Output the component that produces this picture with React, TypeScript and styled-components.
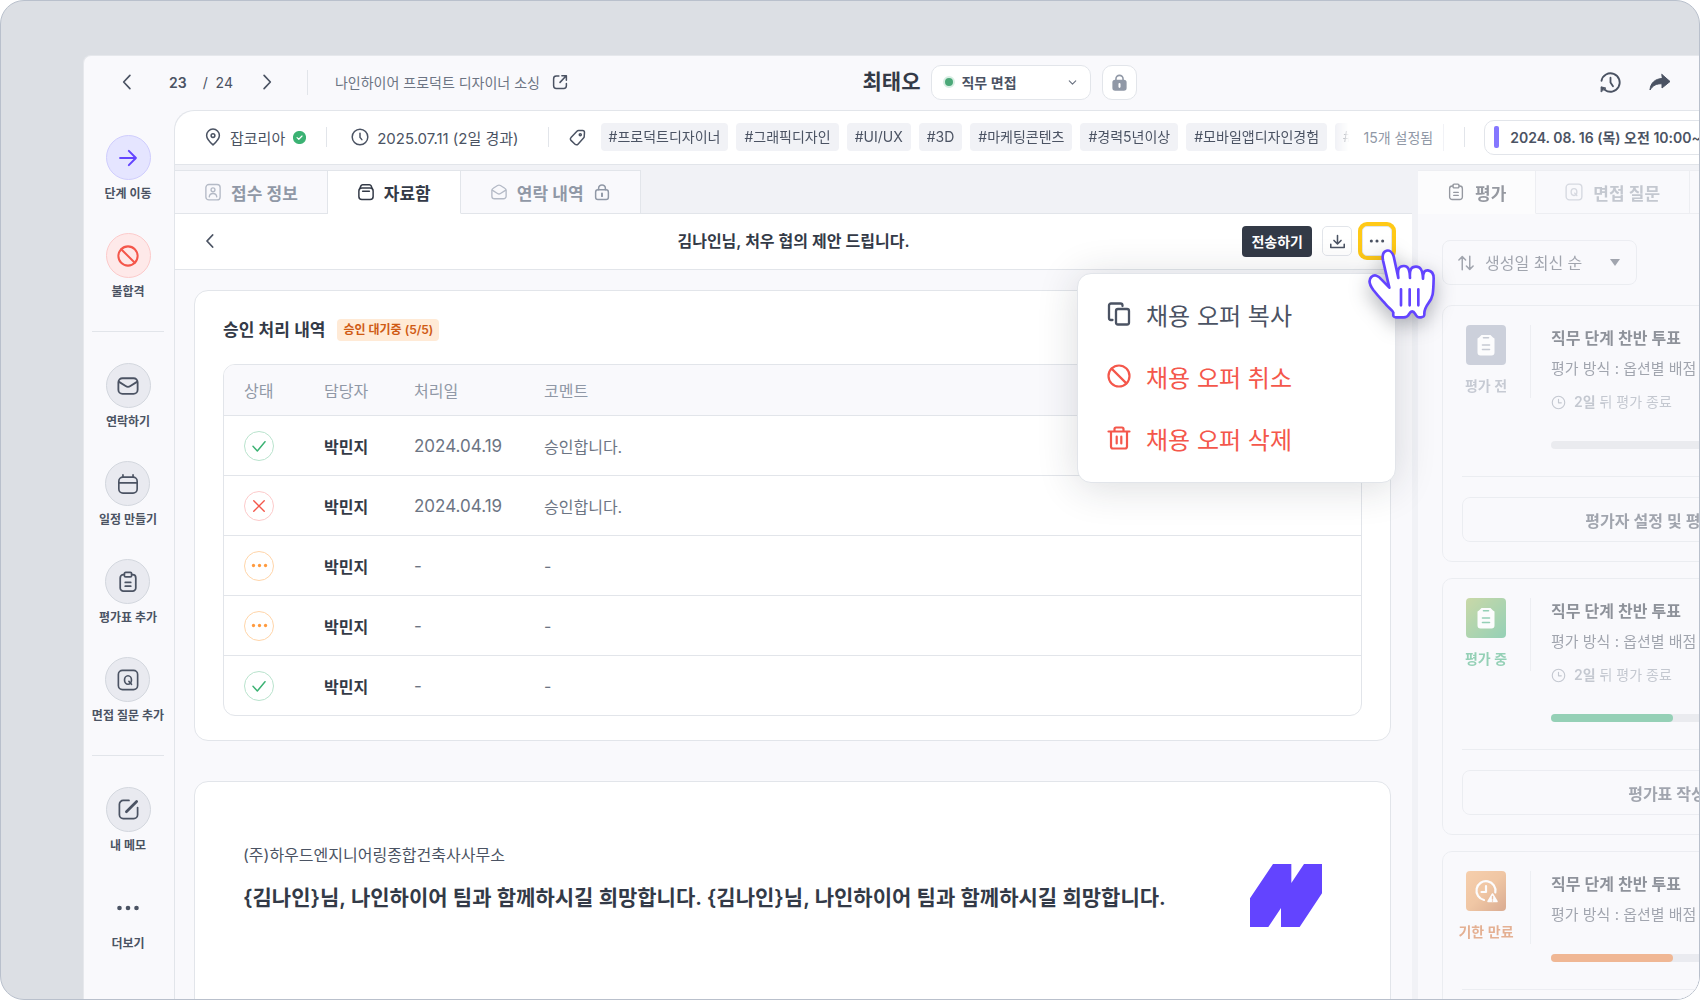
import React from 'react';
import styled, { createGlobalStyle, css } from 'styled-components';

const c = {
  line: '#e2e5ea',
  soft: '#f9f9fc',
  mute: '#f1f2f6',
  ink: '#333a47',
  text: '#4b5363',
  sub: '#6c7483',
  faint: '#9098a6',
  violet: '#6344ff',
  green: '#33a973',
  red: '#f4574b',
  orange: '#ff9a3e',
};

const Global = createGlobalStyle`
  *, *::before, *::after { box-sizing: border-box; }
  body { margin: 0; background: #fff; }
  body, button, select, table {
    font-family: Inter, 'Noto Sans CJK KR', sans-serif;
    color: ${c.text};
  }
  button, select { margin: 0; padding: 0; border: 0; background: none; font-size: inherit; }
  h1, h2, h3, p, ul { margin: 0; padding: 0; }
  ul { list-style: none; }
  a { color: inherit; text-decoration: none; }
  svg { display: block; flex: none; }
`;

/* ---------- icons ---------- */

type IconProps = { size?: number; color?: string; width?: number; children?: React.ReactNode };

const Svg = ({ size = 20, color = 'currentColor', width = 2, children }: IconProps) => (
  <svg
    width={size}
    height={size}
    viewBox="0 0 24 24"
    fill="none"
    stroke={color}
    strokeWidth={width}
    strokeLinecap="round"
    strokeLinejoin="round"
    aria-hidden="true"
  >
    {children}
  </svg>
);

const ChevronLeft = (p: IconProps) => <Svg {...p}><path d="M15.5 4 8 12l7.5 8" /></Svg>;
const ChevronRight = (p: IconProps) => <Svg {...p}><path d="M8.5 4 16 12l-7.5 8" /></Svg>;
const ChevronDown = (p: IconProps) => <Svg {...p}><path d="m5 8.500 7 7 7-7" /></Svg>;
const ExternalIcon = (p: IconProps) => (
  <Svg {...p}><path d="M10.5 4H7a3.500 3.500 0 0 0-3.500 3.500V17A3.500 3.500 0 0 0 7 20.500h10a3.500 3.500 0 0 0 3.500-3.500v-3M14.500 3.500h6v6M20 4l-8 8.500" /></Svg>
);
const HistoryIcon = (p: IconProps) => (
  <Svg {...p}><path d="M2.6 10.200A9.600 9.600 0 1 1 6 19.500" /><path d="M2.200 21.500v-5l4.600 1.200z" fill="currentColor" strokeWidth="1" /><path d="M12 7v5l2.600 4" /></Svg>
);
const ShareIcon = (p: IconProps) => (
  <Svg {...p}><path d="M14 4.500 22 11.500 14 18v-4.200C8.500 13.400 4.800 15.500 2 20 2.500 13 7 8.800 14 8.500z" fill="currentColor" strokeWidth="1" /></Svg>
);
const LockSolid = (p: IconProps) => (
  <Svg {...p}><path d="M7.500 10V7.500a4.500 4.500 0 0 1 9 0V10" /><rect x="4" y="9.500" width="16" height="12" rx="2.500" fill="currentColor" /><path d="M12 14v3.500" stroke="#fff" strokeWidth="2.600" /></Svg>
);
const LockLine = (p: IconProps) => (
  <Svg {...p}><path d="M7.500 9V7a4.500 4.500 0 0 1 9 0v2" /><rect x="3.500" y="9" width="17" height="13" rx="3" /><path d="M12 14v3.500" strokeWidth="2.600" /></Svg>
);
const PinIcon = (p: IconProps) => (
  <Svg {...p}><path d="M12 22.500c4-3.600 8.500-8 8.500-12.600a8.500 8.500 0 0 0-17 0c0 4.600 4.500 9 8.500 12.600z" /><circle cx="12" cy="10" r="2.500" /></Svg>
);
const CheckBadge = ({ size = 14 }: IconProps) => (
  <Svg size={size} width={2.2}><circle cx="12" cy="12" r="11" fill="#3bb273" stroke="#3bb273" /><path d="m7.500 12.300 3.200 3 6-6" stroke="#fff" /></Svg>
);
const ClockIcon = (p: IconProps) => <Svg {...p}><circle cx="12" cy="12" r="10.400" /><path d="M12 7v5.500l2.500 3" /></Svg>;
const ClockCorner = (p: IconProps) => <Svg {...p}><circle cx="12" cy="12" r="10" /><path d="M12 7v5.500h4.500" /></Svg>;
const TagIcon = (p: IconProps) => (
  <Svg {...p}><path d="M13.300 3.200h5.200A2.300 2.300 0 0 1 20.800 5.500l-.3 5.200a3 3 0 0 1-.9 2l-7 7.700a2.600 2.600 0 0 1-3.700.1l-5.100-4.900a2.600 2.600 0 0 1 0-3.700l7.500-7.800a3 3 0 0 1 2-.9z" /><circle cx="15.500" cy="8.500" r="1.300" /></Svg>
);
const PersonCard = (p: IconProps) => (
  <Svg {...p}><rect x="2.500" y="2" width="19" height="20.500" rx="4" /><circle cx="12" cy="9" r="2.600" /><path d="M7 18.500c.3-3 2.200-4.500 5-4.500s4.700 1.500 5 4.500" /></Svg>
);
const ArchiveIcon = (p: IconProps) => (
  <Svg {...p}><path d="M3.500 8 5.200 3.800A2.500 2.500 0 0 1 7.500 2.200h9a2.500 2.500 0 0 1 2.300 1.600L20.500 8" /><rect x="2.500" y="6.500" width="19" height="15.500" rx="4" /><path d="M7.500 11h9" /></Svg>
);
const MailOpen = (p: IconProps) => (
  <Svg {...p}><path d="M2.500 10c0-1.400.6-2.300 1.800-3l5.800-3.600a3.600 3.600 0 0 1 3.800 0L19.700 7c1.200.7 1.800 1.600 1.800 3v7.500a3.500 3.500 0 0 1-3.500 3.500H6a3.500 3.500 0 0 1-3.500-3.500z" /><path d="m3 9.500 7 4.500a3.600 3.600 0 0 0 4 0l7-4.500" /></Svg>
);
const MailIcon = (p: IconProps) => (
  <Svg {...p}><rect x="1.500" y="3.500" width="21" height="17" rx="4.500" /><path d="m2.200 7.500 7.200 4.600a4.800 4.800 0 0 0 5.200 0l7.200-4.600" /></Svg>
);
const CalendarIcon = (p: IconProps) => (
  <Svg {...p}><rect x="2" y="4.500" width="20" height="17.500" rx="4.500" /><path d="M2 10.800h20M6.500 4.500V2M17.500 4.500V2" /></Svg>
);
const ClipIcon = (p: IconProps) => (
  <Svg {...p}><path d="M8 4H7a3.500 3.500 0 0 0-3.500 3.500v11A3.500 3.500 0 0 0 7 22h10a3.500 3.500 0 0 0 3.500-3.500v-11A3.500 3.500 0 0 0 17 4h-1" /><rect x="8" y="1.500" width="8" height="5" rx="1.500" /><path d="M9 12.500h6M9 16.500h6" /></Svg>
);
const QuestionBox = (p: IconProps) => (
  <Svg {...p}><rect x="1.500" y="1.500" width="21" height="21" rx="4.500" /><ellipse cx="12" cy="12" rx="3.800" ry="4.600" /><path d="m13 13.500 2.800 3.200" /></Svg>
);
const MemoIcon = (p: IconProps) => (
  <Svg {...p}><path d="M12.500 2.500H6.500a4 4 0 0 0-4 4v11a4 4 0 0 0 4 4h11a4 4 0 0 0 4-4V10" /><path d="M9.800 14.400 20.500 3.600" strokeWidth="2.800" /></Svg>
);
const ArrowRight = (p: IconProps) => <Svg {...p}><path d="M2.500 12h19M13 3.500l8.500 8.500-8.500 8.500" /></Svg>;
const BanIcon = (p: IconProps) => <Svg {...p}><circle cx="12" cy="12" r="10.500" /><path d="m4.600 4.600 14.800 14.800" /></Svg>;
const DotsIcon = (p: IconProps) => (
  <Svg {...p}><g fill={p.color ?? 'currentColor'} stroke="none"><circle cx="3.500" cy="12" r="2.300" /><circle cx="12" cy="12" r="2.300" /><circle cx="20.500" cy="12" r="2.300" /></g></Svg>
);
const CheckIcon = (p: IconProps) => <Svg {...p}><path d="m3 12.500 6.500 7L21 5.500" /></Svg>;
const CloseIcon = (p: IconProps) => <Svg {...p}><path d="m3 3 18 18M21 3 3 21" /></Svg>;
const DownloadIcon = (p: IconProps) => <Svg {...p}><path d="M12 3.500V15M7 10.500l5 5 5-5M2.500 16v4.500h19V16" /></Svg>;
const CopyIcon = (p: IconProps) => (
  <Svg {...p}><rect x="9" y="7" width="13" height="15.500" rx="2" /><path d="M5.500 18H4a2 2 0 0 1-2-2V3.500a2 2 0 0 1 2-2h9.500a2 2 0 0 1 2 2V4" /></Svg>
);
const TrashIcon = (p: IconProps) => (
  <Svg {...p}><path d="M1.500 5.500h21M4 5.500v15a2 2 0 0 0 2 2h12a2 2 0 0 0 2-2v-15M7.500 5v-2a1.500 1.500 0 0 1 1.500-1.500h6A1.500 1.500 0 0 1 16.500 3v2M9.700 10.500v7M14.300 10.500v7" /></Svg>
);
const SortIcon = (p: IconProps) => <Svg {...p}><path d="M7 21V3.500M2.500 8 7 3.500 11.500 8M17 3v17.500M12.500 16l4.500 4.500 4.500-4.500" /></Svg>;
const ClipSolid = () => (
  <Svg size={24}>
    <path d="M7.500 2h9L19 4.500l1.500 1v14a3 3 0 0 1-3 3h-11a3 3 0 0 1-3-3v-14L5 4.500z" fill="#fff" stroke="none" />
    <path d="M9.500 4.800h5M8.500 12h7M8.500 16.500h7" strokeWidth="1.600" />
  </Svg>
);
const OverdueIcon = () => (
  <Svg size={24} color="#fff" width={2.2}><path d="M10 21a9.500 9.500 0 1 1 11.300-7.500" /><path d="M12 7v6H7.500" /><path d="m18.500 15 4.500 7.500h-9z" fill="#fff" strokeWidth="1.500" /><path d="M18.500 17.500v2.500M18.500 22v.1" stroke="#d9874f" strokeWidth="1.400" /></Svg>
);
const NineLogo = () => (
  <svg width="72" height="63" viewBox="0 0 216 189" role="img" aria-label="logo">
    <path d="M69 0h55v57L162 0h54v88l-67 101H93v-57l-38 57H0v-86z" fill={c.violet} />
  </svg>
);
const HandIcon = () => (
  <svg width="68" height="73" viewBox="0 0 204 219" fill="none" aria-hidden="true">
    <path
      d="M64 119 45 37C39 4 68-3 77 25l14 65c-4-32 4-35 16-36 12-1 18 8 19 36-2-28 5-34 18-34 13 0 20 8 21 36 0-22 6-26 15-25 13 2 17 12 17 24-1 47-2 57-16 75-9 13-12 18-12 30 1 9-2 11-10 12-10 1-13-2-18-11-5-9-12-9-17 0-5 10-9 11-17 11H84c-8 0-9-4-8-14-2-8-15-14-26-29C38 152 31 145 16 126 2 107 1 96 10 87c10-9 21-4 30 7z"
      fill="#fff"
      stroke={c.violet}
      strokeWidth="8"
      strokeLinejoin="round"
    />
    <path d="M99 124v48M125 124v48M151 124v48" stroke={c.violet} strokeWidth="8" strokeLinecap="round" />
  </svg>
);

/* ---------- frame ---------- */

const Desk = styled.div`
  height: 100vh;
  min-height: 600px;
  padding: 54px 0 0 82px;
  overflow: hidden;
  background: #dcdfe4;
  border: 1px solid #b9c0cc;
  border-radius: 24px;
`;

const Window = styled.div`
  display: flex;
  flex-direction: column;
  width: calc(100% + 217px);
  height: 100%;
  background: ${c.soft};
  border: solid #e6e8ec;
  border-width: 1px 0 0 1px;
  border-radius: 8px 0 0 0;
`;

const Header = styled.header`
  display: grid;
  grid-template-columns: 1fr auto 1fr;
  align-items: center;
  flex: 0 0 54px;
  padding-bottom: 2px;
`;

const Row = styled.div<{ $gap?: number }>`
  display: flex;
  align-items: center;
  gap: ${(p) => p.$gap ?? 8}px;
`;

const Pager = styled.nav`
  display: flex;
  align-items: center;
  padding-left: 33px;
  font-size: 14px;
  b { margin: 0 16px 0 32px; font-weight: 600; }
  span { margin-right: 24px; }
`;

const IconButton = styled.button`
  display: grid;
  place-items: center;
  color: ${c.text};
  cursor: pointer;
`;

const Divider = styled.i<{ $h: number; $left?: number; $right?: number; $light?: boolean }>`
  flex: none;
  width: 1px;
  height: ${(p) => p.$h}px;
  margin: 0 ${(p) => p.$right ?? 0}px 0 ${(p) => p.$left ?? 0}px;
  background: ${(p) => (p.$light ? c.mute : c.line)};
`;

const JobLink = styled.a`
  display: flex;
  align-items: center;
  gap: 11px;
  font-size: 14px;
  color: ${c.sub};
  white-space: nowrap;
`;

const Name = styled.h1`
  font-size: 21px;
  line-height: 30px;
  font-weight: 600;
  color: ${c.ink};
`;

const StageBox = styled.label`
  display: flex;
  align-items: center;
  width: 160px;
  height: 35px;
  padding: 0 12px 0 11px;
  background: #fff;
  border: 1px solid ${c.line};
  border-radius: 10px;
  color: ${c.sub};
  select {
    flex: 1;
    appearance: none;
    margin-left: 6px;
    font-size: 14px;
    font-weight: 600;
    color: ${c.text};
  }
`;

const Dot = styled.i`
  width: 12px;
  height: 12px;
  border: 2px solid #d8eee3;
  border-radius: 50%;
  background: #4ba878;
`;

const LockButton = styled(IconButton)`
  width: 35px;
  height: 35px;
  background: #fff;
  border: 1px solid ${c.line};
  border-radius: 10px;
  color: ${c.faint};
`;

const Actions = styled(Row)`
  justify-content: flex-end;
  padding-right: 244px;
`;

const Body = styled.div`
  display: flex;
  flex: 1;
  min-height: 0;
`;

/* ---------- side bar ---------- */

const Side = styled.nav`
  display: flex;
  flex-direction: column;
  align-items: center;
  gap: 30px;
  flex: 0 0 90px;
  padding: 25px 2px 0 0;
  hr { flex: none; width: 72px; height: 2px; margin: 0; border: 0; border-top: 1px solid ${c.line}; }
`;

const SideButton = styled.button`
  display: flex;
  flex-direction: column;
  align-items: center;
  gap: 5px;
  flex: none;
  font-size: 12px;
  line-height: 18px;
  font-weight: 600;
  color: ${c.text};
  white-space: nowrap;
  cursor: pointer;
`;

const tones = {
  plain: css`background: #e9eaf0; border-color: #d3d7de;`,
  violet: css`background: #e5e5ff; border-color: #cfcdfd; color: ${c.violet};`,
  red: css`background: #fee9e9; border-color: #fccaca; color: ${c.red};`,
  none: css`border-color: transparent;`,
};

const Circle = styled.span<{ $tone: keyof typeof tones }>`
  display: grid;
  place-items: center;
  width: 45px;
  height: 45px;
  border: 1px solid;
  border-radius: 50%;
  ${(p) => tones[p.$tone]}
`;

/* ---------- main ---------- */

const Main = styled.main`
  display: flex;
  flex-direction: column;
  flex: 1;
  min-width: 0;
  background: ${c.mute};
  border: solid ${c.line};
  border-width: 1px 0 0 1px;
  border-radius: 20px 0 0 0;
`;

const InfoBar = styled.div`
  display: flex;
  align-items: center;
  flex: 0 0 54px;
  padding: 0 0 1px 29px;
  background: #fff;
  border-bottom: 1px solid ${c.line};
  border-radius: 20px 0 0 0;
  font-size: 15px;
  white-space: nowrap;
`;

const Tags = styled.ul`
  display: flex;
  gap: 8px;
  width: 748px;
  margin-left: 14px;
  overflow: hidden;
  mask-image: linear-gradient(90deg, #000 734px, transparent 748px);
`;

const Tag = styled.li`
  flex: none;
  padding: 0 8px;
  background: ${c.mute};
  border-radius: 4px;
  font-size: 14px;
  line-height: 28px;
`;

const TagCount = styled.span`
  margin-left: 15px;
  font-size: 14px;
  color: ${c.faint};
`;

const Schedule = styled.button`
  display: flex;
  align-items: center;
  gap: 11px;
  width: 320px;
  height: 35px;
  padding: 0 9px;
  border: 1px solid ${c.line};
  border-radius: 10px;
  font-size: 14px;
  font-weight: 600;
  &::before { content: ''; width: 5px; height: 22px; border-radius: 2px; background: #8577ff; }
`;

const Split = styled.div`
  display: flex;
  flex: 1;
  min-height: 0;
  padding-top: 5px;
  gap: 6px;
`;

const Left = styled.section`
  position: relative;
  z-index: 1;
  display: flex;
  flex-direction: column;
  flex: 1;
  min-width: 0;
`;

const Tabs = styled.div`
  display: flex;
  flex: 0 0 44px;
  height: 44px;
  border-bottom: 1px solid ${c.line};
`;

const Tab = styled.button<{ $on?: boolean }>`
  display: flex;
  align-items: center;
  gap: 9px;
  height: 44px;
  padding: 0 29px;
  background: ${c.soft};
  border: solid ${c.line};
  border-width: 1px 1px 1px 0;
  font-size: 17px;
  font-weight: 600;
  color: ${c.faint};
  white-space: nowrap;
  cursor: pointer;
  ${(p) => p.$on && css`background: #fff; border-bottom-color: #fff; color: ${c.ink};`}
`;

const DocBar = styled.div`
  display: grid;
  grid-template-columns: 1fr auto 1fr;
  align-items: center;
  flex: 0 0 56px;
  padding: 0 20px 1px;
  background: #fff;
  border-bottom: 1px solid ${c.line};
  > :last-child { justify-self: end; }
`;

const BackButton = styled(IconButton)`
  width: 30px;
  height: 30px;
`;

const DocTitle = styled.h2`
  font-size: 16px;
  line-height: 24px;
  font-weight: 600;
  color: ${c.ink};
`;

const SendButton = styled.button`
  height: 31px;
  padding: 0 9px;
  background: ${c.ink};
  border-radius: 4px;
  font-size: 14px;
  font-weight: 600;
  color: #fff;
  cursor: pointer;
`;

const SquareButton = styled(IconButton)<{ $ring?: boolean }>`
  width: 30px;
  height: 30px;
  background: #fff;
  border: 1px solid ${c.line};
  border-radius: 5px;
  ${(p) => p.$ring && css`box-shadow: 0 0 0 4px #ffc917;`}
`;

const MenuAnchor = styled.div`
  position: relative;
`;

const Menu = styled.ul`
  position: absolute;
  top: 47px;
  right: -4px;
  width: 319px;
  padding: 10px 0 12px;
  background: #fff;
  border: 1px solid ${c.line};
  border-radius: 14px;
  box-shadow: 0 4px 40px rgba(30, 35, 50, 0.16);
`;

const MenuItem = styled.button<{ $danger?: boolean }>`
  display: flex;
  align-items: center;
  gap: 15px;
  width: 100%;
  height: 62px;
  padding: 0 29px 2px;
  font-size: 24px;
  color: ${(p) => (p.$danger ? c.red : c.text)};
  cursor: pointer;
`;

const Pointer = styled.span`
  position: absolute;
  top: 22px;
  left: 6px;
  filter: drop-shadow(0 6px 10px rgba(30, 35, 50, 0.35));
  pointer-events: none;
`;

const Page = styled.div`
  display: flex;
  flex-direction: column;
  gap: 40px;
  flex: 1;
  min-height: 0;
  padding: 20px 21px 0 19px;
  background: ${c.soft};
  overflow: hidden;
`;

const Card = styled.article`
  flex: none;
  padding: 24px 28px;
  background: #fff;
  border: 1px solid ${c.line};
  border-radius: 14px;
`;

const CardTitle = styled.h3`
  font-size: 17px;
  line-height: 30px;
  font-weight: 600;
  color: ${c.ink};
`;

const Badge = styled.span`
  padding: 0 6px;
  background: #ffead6;
  border-radius: 4px;
  font-size: 12px;
  line-height: 22px;
  font-weight: 600;
  color: #cf5a14;
`;

const Table = styled.table`
  width: 100%;
  margin-top: 19px;
  border: 1px solid ${c.line};
  border-radius: 12px;
  border-spacing: 0;
  font-size: 16px;
  text-align: left;
  color: ${c.sub};
  overflow: hidden;
  th { height: 50px; padding: 0; background: ${c.soft}; font-weight: 400; color: ${c.faint}; }
  td { height: 60px; padding: 0; border-top: 1px solid ${c.line}; }
  td:nth-child(2) { font-weight: 600; color: ${c.ink}; }
  td:nth-child(3) { font-size: 17px; }
  th:first-child, td:first-child { width: 100px; padding-left: 20px; }
  th:nth-child(2) { width: 90px; }
  th:nth-child(3) { width: 130px; }
`;

const states = {
  ok: { line: '#b9e3cd', color: '#3bb273' },
  no: { line: '#fccaca', color: c.red },
  wait: { line: '#ffd5a9', color: c.orange },
};

const State = styled.span<{ $s: keyof typeof states }>`
  display: grid;
  place-items: center;
  width: 30px;
  height: 30px;
  border: 1px solid ${(p) => states[p.$s].line};
  border-radius: 50%;
  color: ${(p) => states[p.$s].color};
`;

const OfferCard = styled(Card)`
  display: flex;
  align-items: flex-start;
  justify-content: space-between;
  min-height: 400px;
  padding: 56px 68px 56px 48px;
`;

const Company = styled.p`
  padding-top: 5px;
  font-size: 16px;
  line-height: 24px;
`;

const Greeting = styled.h3`
  margin-top: 16px;
  font-size: 21px;
  line-height: 30px;
  font-weight: 600;
  color: ${c.ink};
`;

const LogoSlot = styled.div`
  padding-top: 26px;
`;

/* ---------- evaluation panel ---------- */

const Right = styled.aside`
  flex: 0 0 498px;
  min-width: 0;
  background: ${c.soft};
  > * { opacity: 0.5; }
`;

const RightTabs = styled(Tabs)`
  background: ${c.mute};
  ${Tab} { gap: 10px; }
  &::after {
    content: '';
    flex: 1;
    height: 44px;
    background: ${c.soft};
    border: solid ${c.line};
    border-width: 1px 0;
  }
`;

const RightBody = styled.div`
  display: flex;
  flex-direction: column;
  gap: 16px;
  padding: 26px 24px 0;
`;

const SortBox = styled.label`
  display: flex;
  align-items: center;
  align-self: flex-start;
  width: 195px;
  height: 45px;
  margin-bottom: 4px;
  padding: 0 16px 0 14px;
  border: 1px solid #dfe2e8;
  border-radius: 8px;
  select { flex: 1; appearance: none; margin-left: 10px; font-size: 16px; color: ${c.text}; }
`;

const EvalCard = styled.article`
  padding: 19px;
  border: 1px solid #dfe2e8;
  border-radius: 10px;
`;

const EvalGrid = styled.div`
  display: grid;
  grid-template-columns: 48px 1px minmax(0, 1fr);
  gap: 20px;
  padding-bottom: 27px;
  border-bottom: 1px solid #dfe2e8;
  white-space: nowrap;
`;

const EvalState = styled.div<{ $color: string }>`
  display: flex;
  flex-direction: column;
  align-items: center;
  gap: 12px;
  font-size: 14px;
  line-height: 18px;
  font-weight: 600;
  color: ${(p) => p.$color};
`;

const EvalIcon = styled.span<{ $bg: string }>`
  display: grid;
  place-items: center;
  width: 40px;
  height: 40px;
  border-radius: 4px;
  background: ${(p) => p.$bg};
`;

const EvalTitle = styled.h3`
  font-size: 16px;
  line-height: 26px;
  font-weight: 600;
  color: #252d3b;
`;

const EvalMethod = styled.p`
  margin-top: 6px;
  font-size: 15px;
  line-height: 24px;
`;

const EvalDue = styled.p`
  display: flex;
  align-items: center;
  gap: 8px;
  margin-top: 9px;
  font-size: 14px;
  line-height: 24px;
  color: ${c.faint};
  b { font-weight: 600; }
`;

const Track = styled.div`
  height: 8px;
  margin-top: 27px;
  border-radius: 4px;
  background: #dcdee3;
`;

const Bar = styled.div<{ $color: string }>`
  height: 8px;
  border-radius: 4px;
  background: ${(p) => p.$color};
`;

const WideButton = styled.button`
  width: 100%;
  height: 45px;
  margin-top: 20px;
  border: 1px solid #dfe2e8;
  border-radius: 8px;
  font-size: 16px;
  font-weight: 600;
  cursor: pointer;
`;

/* ---------- data ---------- */

const sideGroups = [
  [
    { label: '단계 이동', tone: 'violet', icon: <ArrowRight size={20} width={2.4} /> },
    { label: '불합격', tone: 'red', icon: <BanIcon size={22} width={2.2} /> },
  ],
  [
    { label: '연락하기', tone: 'plain', icon: <MailIcon size={22} /> },
    { label: '일정 만들기', tone: 'plain', icon: <CalendarIcon size={22} width={1.8} /> },
    { label: '평가표 추가', tone: 'plain', icon: <ClipIcon size={22} width={1.9} /> },
    { label: '면접 질문 추가', tone: 'plain', icon: <QuestionBox size={22} width={1.8} /> },
  ],
  [
    { label: '내 메모', tone: 'plain', icon: <MemoIcon size={23} width={1.8} /> },
    { label: '더보기', tone: 'none', icon: <DotsIcon size={24} /> },
  ],
] as const;

const tags = ['#프로덕트디자이너', '#그래픽디자인', '#UI/UX', '#3D', '#마케팅콘텐츠', '#경력5년이상', '#모바일앱디자인경험', '#'];

const approvals: { state: keyof typeof states; date: string; comment: string }[] = [
  { state: 'ok', date: '2024.04.19', comment: '승인합니다.' },
  { state: 'no', date: '2024.04.19', comment: '승인합니다.' },
  { state: 'wait', date: '-', comment: '-' },
  { state: 'wait', date: '-', comment: '-' },
  { state: 'ok', date: '-', comment: '-' },
];

const stateNames = { ok: '승인', no: '반려', wait: '대기' };

const StateIcon = ({ s }: { s: keyof typeof states }) => (
  <State $s={s} role="img" aria-label={stateNames[s]}>
    {s === 'ok' && <CheckIcon size={16} width={2.2} />}
    {s === 'no' && <CloseIcon size={14} width={2.4} />}
    {s === 'wait' && <DotsIcon size={17} />}
  </State>
);

const evals = [
  { state: '평가 전', color: '#949cab', bg: '#a1a9bb', icon: <ClipSolid />, due: true, value: 0, bar: c.green, action: '평가자 설정 및 평가 시작' },
  { state: '평가 중', color: c.green, bg: 'linear-gradient(135deg, #9bb955, #33a973)', icon: <ClipSolid />, due: true, value: 38, bar: c.green, action: '평가표 작성' },
  { state: '기한 만료', color: '#d06a2c', bg: 'linear-gradient(135deg, #f5a65f, #e8954f 50%, #bb6029)', icon: <OverdueIcon />, due: false, value: 38, bar: '#e7772d', action: '평가표 작성' },
];

export default function App() {
  return (
    <>
      <Global />
      <Desk>
        <Window>
          <Header>
            <Row $gap={0}>
              <Pager aria-label="지원자 이동">
                <IconButton aria-label="이전 지원자"><ChevronLeft size={20} /></IconButton>
                <b>23</b>
                <span>/&nbsp; 24</span>
                <IconButton aria-label="다음 지원자"><ChevronRight size={20} /></IconButton>
              </Pager>
              <Divider $h={25} $left={30} $right={27} />
              <JobLink href="#job">
                나인하이어 프로덕트 디자이너 소싱
                <ExternalIcon size={18} color={c.text} />
              </JobLink>
            </Row>
            <Row $gap={11}>
              <Name>최태오</Name>
              <StageBox>
                <Dot />
                <select aria-label="전형 단계"><option>직무 면접</option></select>
                <ChevronDown size={11} width={2.6} />
              </StageBox>
              <LockButton aria-label="잠금"><LockSolid size={19} /></LockButton>
            </Row>
            <Actions $gap={26}>
              <IconButton aria-label="이력"><HistoryIcon size={23} width={1.9} /></IconButton>
              <IconButton aria-label="공유"><ShareIcon size={24} /></IconButton>
            </Actions>
          </Header>

          <Body>
            <Side>
              {sideGroups.map((group, i) => (
                <React.Fragment key={i}>
                  {i > 0 && <hr />}
                  {group.map((item) => (
                    <SideButton key={item.label}>
                      <Circle $tone={item.tone}>{item.icon}</Circle>
                      {item.label}
                    </SideButton>
                  ))}
                </React.Fragment>
              ))}
            </Side>

            <Main>
              <InfoBar>
                <Row><PinIcon size={18} /> 잡코리아 <CheckBadge size={13} /></Row>
                <Divider $h={20} $left={20} $right={24} />
                <Row><ClockIcon size={18} /> 2025.07.11 (2일 경과)</Row>
                <Divider $h={20} $left={29} $right={19} />
                <TagIcon size={19} width={1.9} />
                <Tags>{tags.map((t) => <Tag key={t}>{t}</Tag>)}</Tags>
                <TagCount>15개 설정됨</TagCount>
                <Divider $h={27} $left={10} $light />
                <Divider $h={20} $left={20} $right={19} />
                <Schedule>2024. 08. 16 (목) 오전 10:00~11:00</Schedule>
              </InfoBar>

              <Split>
                <Left>
                  <Tabs role="tablist">
                    <Tab role="tab"><PersonCard size={18} width={1.8} color="#b4bac6" />접수 정보</Tab>
                    <Tab role="tab" aria-selected $on><ArchiveIcon size={18} />자료함</Tab>
                    <Tab role="tab"><MailOpen size={18} width={1.8} color="#b4bac6" />연락 내역<LockLine size={18} /></Tab>
                  </Tabs>
                  <DocBar>
                    <BackButton aria-label="뒤로"><ChevronLeft size={18} width={2.4} /></BackButton>
                    <DocTitle>김나인님, 처우 협의 제안 드립니다.</DocTitle>
                    <Row $gap={10}>
                      <SendButton>전송하기</SendButton>
                      <SquareButton aria-label="다운로드"><DownloadIcon size={17} width={2.2} /></SquareButton>
                      <MenuAnchor>
                        <SquareButton $ring aria-label="더보기" aria-expanded><DotsIcon size={16} /></SquareButton>
                        <Menu>
                          <li><MenuItem><CopyIcon size={24} width={2.3} />채용 오퍼 복사</MenuItem></li>
                          <li><MenuItem $danger><BanIcon size={24} width={2.2} />채용 오퍼 취소</MenuItem></li>
                          <li><MenuItem $danger><TrashIcon size={24} width={2.2} />채용 오퍼 삭제</MenuItem></li>
                        </Menu>
                        <Pointer><HandIcon /></Pointer>
                      </MenuAnchor>
                    </Row>
                  </DocBar>
                  <Page>
                    <Card>
                      <Row $gap={12}>
                        <CardTitle>승인 처리 내역</CardTitle>
                        <Badge>승인 대기중 (5/5)</Badge>
                      </Row>
                      <Table>
                        <thead>
                          <tr><th>상태</th><th>담당자</th><th>처리일</th><th>코멘트</th></tr>
                        </thead>
                        <tbody>
                          {approvals.map((a, i) => (
                            <tr key={i}>
                              <td><StateIcon s={a.state} /></td>
                              <td>박민지</td>
                              <td>{a.date}</td>
                              <td>{a.comment}</td>
                            </tr>
                          ))}
                        </tbody>
                      </Table>
                    </Card>
                    <OfferCard>
                      <div>
                        <Company>(주)하우드엔지니어링종합건축사사무소</Company>
                        <Greeting>{'{김나인}님, 나인하이어 팀과 함께하시길 희망합니다. {김나인}님, 나인하이어 팀과 함께하시길 희망합니다.'}</Greeting>
                      </div>
                      <LogoSlot><NineLogo /></LogoSlot>
                    </OfferCard>
                  </Page>
                </Left>

                <Right>
                  <RightTabs role="tablist">
                    <Tab role="tab" aria-selected $on><ClipIcon size={18} width={1.8} />평가</Tab>
                    <Tab role="tab"><QuestionBox size={18} width={1.8} color="#b4bac6" />면접 질문</Tab>
                  </RightTabs>
                  <RightBody>
                    <SortBox>
                      <SortIcon size={18} />
                      <select aria-label="정렬"><option>생성일 최신 순</option></select>
                      <svg width="10" height="7" viewBox="0 0 10 7" aria-hidden="true"><path d="M0 0h10L5 7z" fill={c.text} /></svg>
                    </SortBox>
                    {evals.map((e) => (
                      <EvalCard key={e.state}>
                        <EvalGrid>
                          <EvalState $color={e.color}>
                            <EvalIcon $bg={e.bg}>{e.icon}</EvalIcon>
                            {e.state}
                          </EvalState>
                          <Divider $h={73} />
                          <div>
                            <EvalTitle>직무 단계 찬반 투표</EvalTitle>
                            <EvalMethod>평가 방식 : 옵션별 배점</EvalMethod>
                            {e.due && <EvalDue><ClockCorner size={15} width={1.8} /><span><b>2일</b> 뒤 평가 종료</span></EvalDue>}
                            <Track role="progressbar" aria-valuenow={e.value} aria-label="진행률">
                              <Bar $color={e.bar} style={{ width: `${e.value}%` }} />
                            </Track>
                          </div>
                        </EvalGrid>
                        <WideButton>{e.action}</WideButton>
                      </EvalCard>
                    ))}
                  </RightBody>
                </Right>
              </Split>
            </Main>
          </Body>
        </Window>
      </Desk>
    </>
  );
}
